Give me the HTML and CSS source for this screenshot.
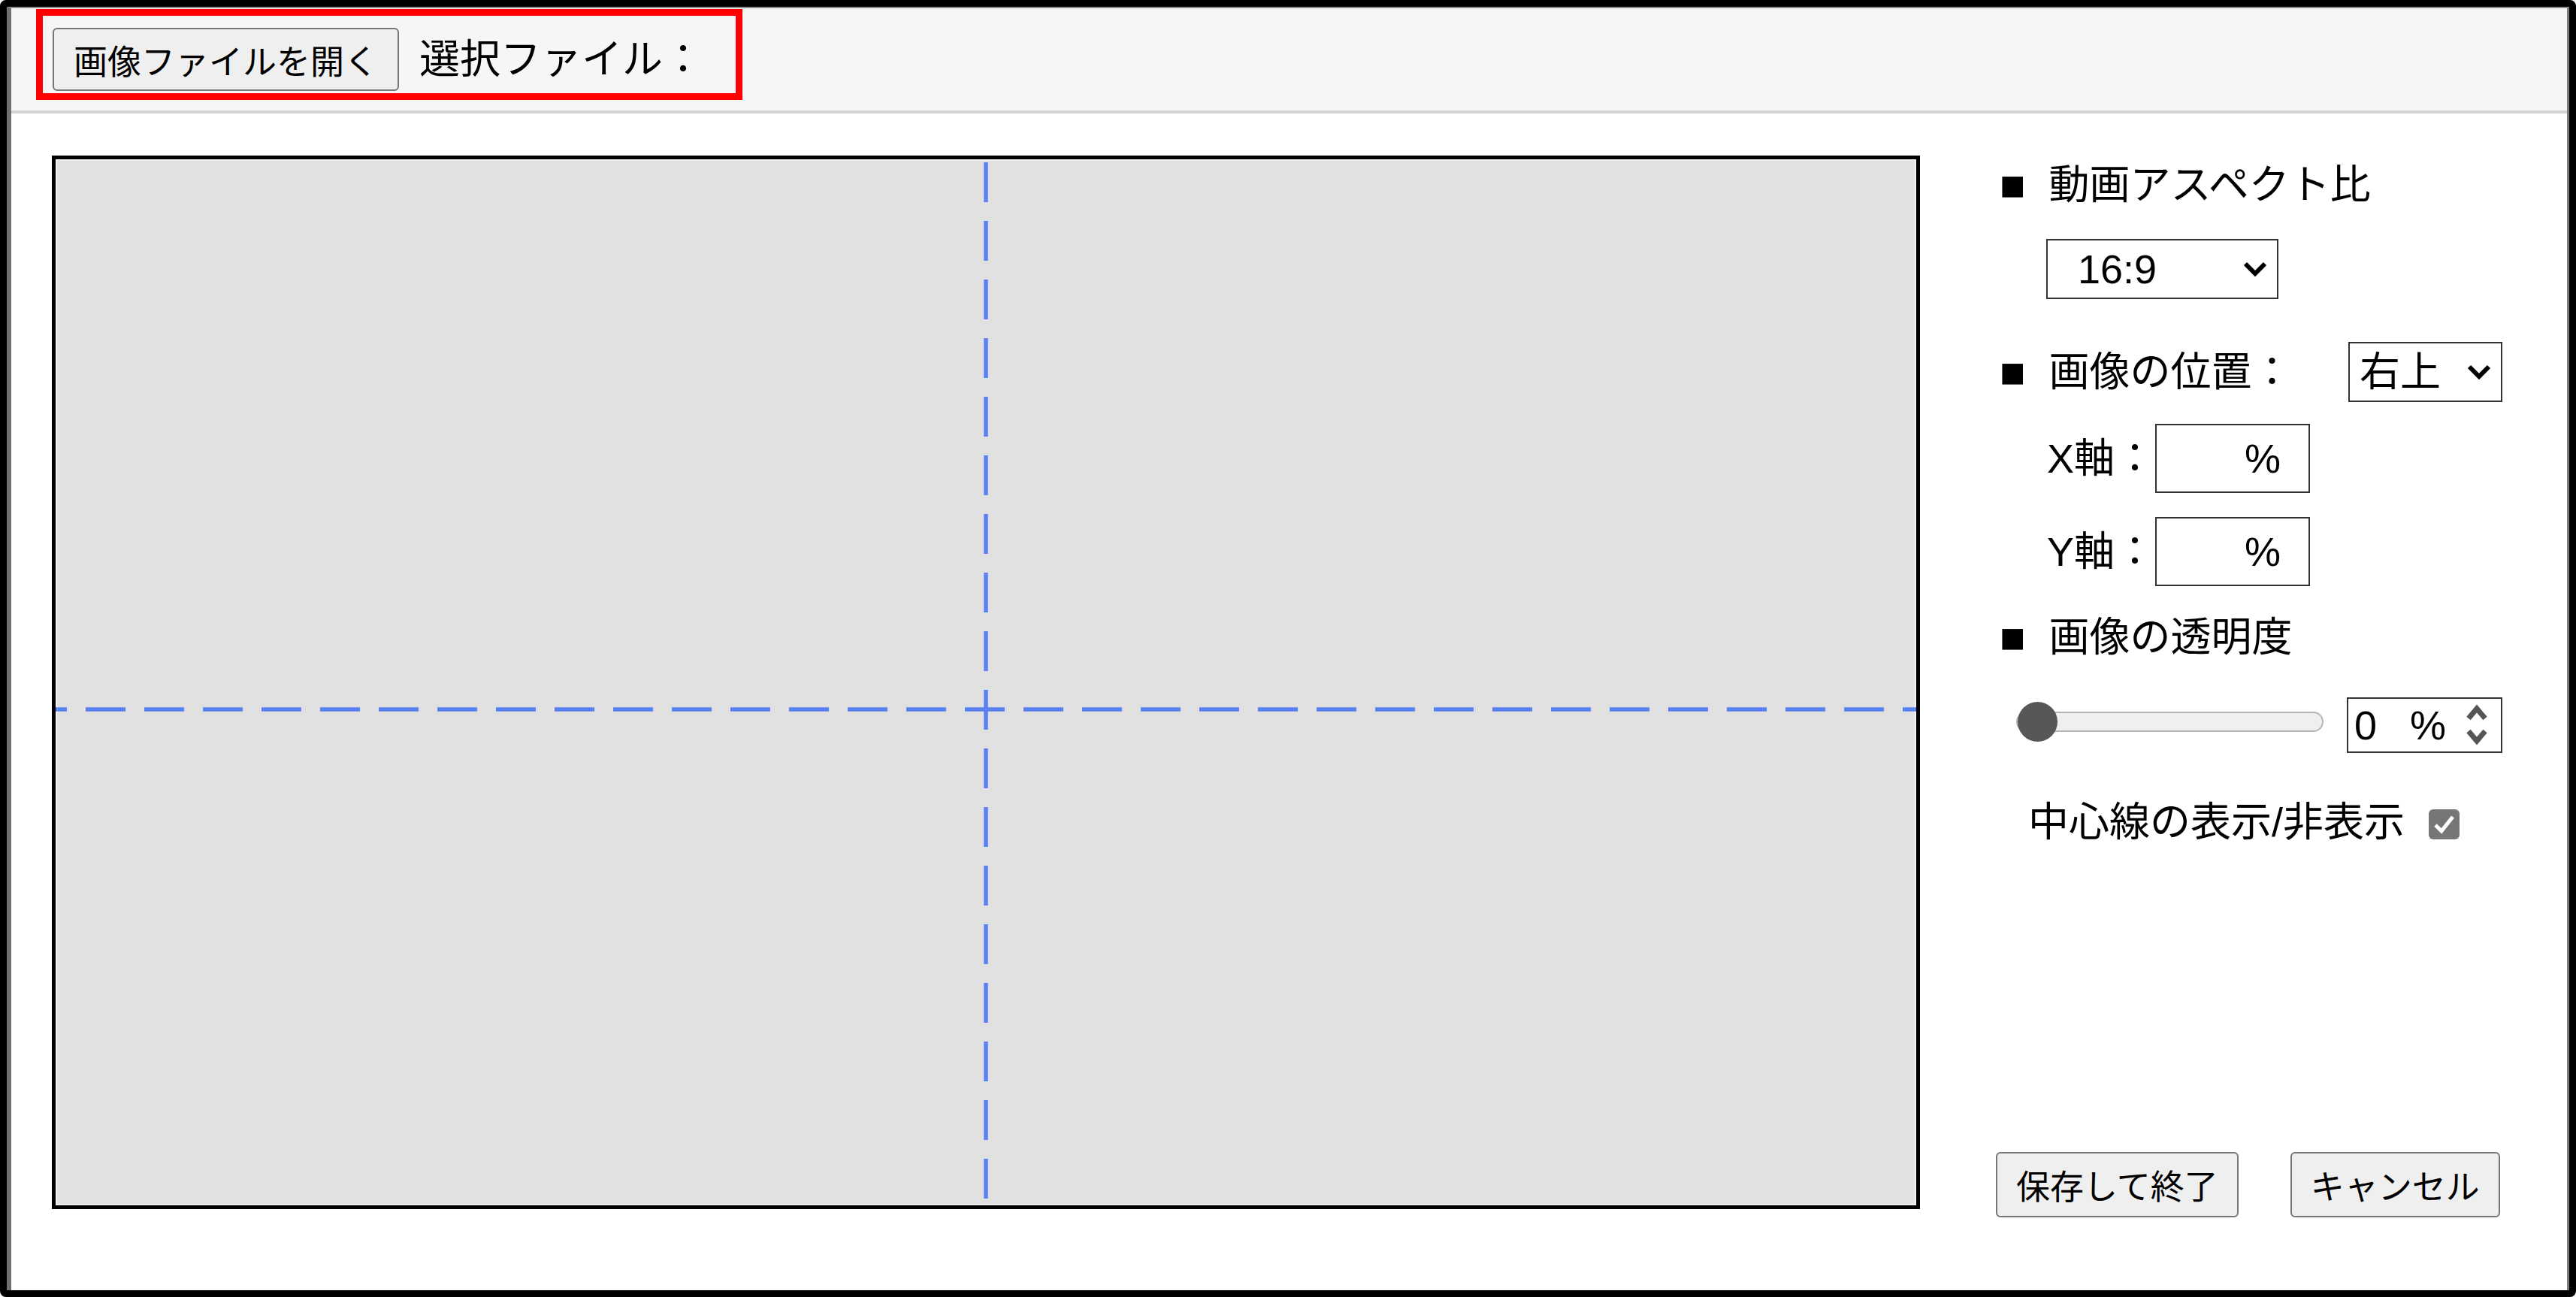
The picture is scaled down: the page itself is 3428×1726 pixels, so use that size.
FILE: index.html
```html
<!DOCTYPE html>
<html lang="ja">
<head>
    <meta charset="UTF-8">
    <meta name="viewport" content="width=device-width, initial-scale=1.0">
    <title>画像位置の設定</title>
    <link rel="stylesheet" href="styles.css">
</head>
<body>
    <div class="window">
        <div class="app">
            <header class="toolbar">
                <button class="btn btn-open">画像ファイルを開く</button>
                <span class="file-label">選択ファイル：</span>
                <div class="highlight"></div>
            </header>

            <main class="workspace">
                <div class="preview">
                    <svg class="guides" width="2476" height="1392" viewBox="0 0 2476 1392">
                        <line x1="1238" y1="0" x2="1238" y2="1392" stroke="#5a81f4" stroke-width="5.5" stroke-dasharray="53 25" stroke-dashoffset="74"/>
                        <line x1="0" y1="732" x2="2476" y2="732" stroke="#5a81f4" stroke-width="5.5" stroke-dasharray="53 25" stroke-dashoffset="38"/>
                    </svg>
                </div>

                <aside class="panel">
                    <div class="heading"><span class="mark">■</span>動画アスペクト比</div>
                    <div class="select select-aspect">
                        <select>
                            <option>16:9</option>
                            <option>4:3</option>
                            <option>1:1</option>
                        </select>
                        <svg class="chevron" width="32" height="20" viewBox="0 0 32 20"><path d="M3 3 L16 16 L29 3" fill="none" stroke="#000" stroke-width="6"/></svg>
                    </div>

                    <div class="heading heading-pos">
                        <span class="mark">■</span>画像の位置：
                        <div class="select select-pos">
                            <select>
                                <option>右上</option>
                                <option>左上</option>
                                <option>右下</option>
                                <option>左下</option>
                                <option>中央</option>
                            </select>
                            <svg class="chevron" width="32" height="20" viewBox="0 0 32 20"><path d="M3 3 L16 16 L29 3" fill="none" stroke="#000" stroke-width="6"/></svg>
                        </div>
                    </div>

                    <div class="axis axis-x">
                        <label for="posX">X軸：</label>
                        <div class="unit-box">
                            <input type="text" id="posX">
                            <span>%</span>
                        </div>
                    </div>
                    <div class="axis axis-y">
                        <label for="posY">Y軸：</label>
                        <div class="unit-box">
                            <input type="text" id="posY">
                            <span>%</span>
                        </div>
                    </div>

                    <div class="heading heading-opacity"><span class="mark">■</span>画像の透明度</div>
                    <div class="opacity-row">
                        <input type="range" class="range" min="0" max="100" value="0">
                        <div class="number-box">
                            <input type="text" value="0">
                            <span>%</span>
                            <svg class="spinner" width="30" height="56" viewBox="0 0 30 56">
                                <path d="M4 19 L15 6 L26 19" fill="none" stroke="#555" stroke-width="7"/>
                                <path d="M4 36 L15 49 L26 36" fill="none" stroke="#555" stroke-width="7"/>
                            </svg>
                        </div>
                    </div>

                    <label class="toggle">中心線の表示/非表示
                        <svg class="check" width="41" height="40" viewBox="0 0 41 40">
                            <rect x="0" y="0" width="41" height="40" rx="6" fill="#767676"/>
                            <path d="M9 21 L17 29 L32 10" fill="none" stroke="#fff" stroke-width="5"/>
                        </svg>
                    </label>

                    <div class="actions">
                        <button class="btn">保存して終了</button>
                        <button class="btn">キャンセル</button>
                    </div>
                </aside>
            </main>
        </div>
    </div>
</body>
</html>
```

FILE: styles.css
```css
body {
    margin: 0;
    font-family: "Liberation Sans", "Noto Sans CJK JP", sans-serif;
    font-size: 54px;
    color: #000;
    background: #fff;
}

.window {
    width: 3428px;
    height: 1726px;
    box-sizing: border-box;
    border: 9px solid #000;
    border-radius: 8px;
    overflow: hidden;
}

.app {
    height: 100%;
    box-sizing: border-box;
    border-left: 6px solid #707070;
    border-top: 2px solid #8c8c8c;
    border-right: 3px solid #7c7c7c;
    display: flex;
    flex-direction: column;
}

/* top bar */
.toolbar {
    position: relative;
    height: 136px;
    padding-left: 55px;
    display: flex;
    align-items: center;
    background: #f6f6f6;
    border-bottom: 4px solid #d4d4d4;
}

.highlight {
    position: absolute;
    left: 33px;
    top: 1px;
    width: 940px;
    height: 121px;
    box-sizing: border-box;
    border: 9px solid #ff0000;
    pointer-events: none;
}

.btn {
    font-family: "Liberation Sans", "Noto Sans CJK JP", sans-serif;
    font-size: 45px;
    color: #000;
    background: #efefef;
    border: 2px solid #767676;
    border-radius: 6px;
    padding: 0 26px;
    height: 84px;
    cursor: pointer;
}

.file-label {
    margin-left: 27px;
    line-height: 76px;
}

/* main */
.workspace {
    flex: 1;
    display: flex;
    align-items: flex-start;
    padding: 56px 0 0 54px;
    gap: 101px;
}

.preview {
    width: 2486px;
    height: 1402px;
    box-sizing: border-box;
    border: 5px solid #000;
    background: #e1e1e1;
    box-shadow: inset 0 0 0 2px #f3f3f3;
}

.guides {
    display: block;
}

.panel {
    width: 676px;
    height: 1412px;
    margin-top: 1px;
    display: flex;
    flex-direction: column;
}

.heading {
    display: flex;
    align-items: center;
    min-height: 76px;
    line-height: 76px;
    padding-left: 5px;
}

.mark {
    font-size: 57px;
    margin-right: 31px;
}

.select {
    position: relative;
    height: 80px;
}
.select select {
    -webkit-appearance: none;
    appearance: none;
    width: 100%;
    height: 100%;
    box-sizing: border-box;
    border: 2px solid #333;
    border-radius: 0;
    background: #fff;
    font-family: inherit;
    font-size: 54px;
    color: #000;
    outline: none;
}
.chevron {
    position: absolute;
    right: 15px;
    top: 50%;
    margin-top: -10px;
    pointer-events: none;
}

.select-aspect {
    width: 309px;
    margin: 34px 0 0 67px;
}
.select-aspect select {
    padding-left: 40px;
}

.heading-pos {
    margin-top: 57px;
}
.select-pos {
    width: 205px;
    margin: 0 2px 0 auto;
}
.select-pos select {
    padding-left: 13px;
}

.axis {
    display: flex;
    align-items: center;
    padding-left: 68px;
    line-height: 76px;
}
.axis-x {
    margin-top: 29px;
}
.axis-y {
    margin-top: 32px;
}

.unit-box {
    display: flex;
    align-items: center;
    width: 206px;
    height: 92px;
    box-sizing: border-box;
    border: 2px solid #333;
    padding-right: 37px;
}
.unit-box input,
.number-box input {
    flex: 1;
    min-width: 0;
    border: 0;
    outline: 0;
    padding: 0;
    background: transparent;
    font-family: inherit;
    font-size: 54px;
    color: #000;
}

.heading-opacity {
    margin-top: 30px;
}

.opacity-row {
    display: flex;
    align-items: flex-start;
    margin-top: 42px;
    padding-left: 27px;
    gap: 31px;
}

.range {
    -webkit-appearance: none;
    appearance: none;
    width: 409px;
    height: 54px;
    margin: 5px 0 0;
    background: transparent;
}
.range::-webkit-slider-runnable-track {
    height: 27px;
    box-sizing: border-box;
    background: #efefef;
    border: 2px solid #b5b5b5;
    border-radius: 14px;
}
.range::-webkit-slider-thumb {
    -webkit-appearance: none;
    width: 53px;
    height: 53px;
    margin-top: -15px;
    border-radius: 50%;
    background: #575757;
}

.number-box {
    display: flex;
    align-items: center;
    width: 207px;
    height: 74px;
    box-sizing: border-box;
    border: 2px solid #333;
    padding-left: 8px;
}
.number-box input {
    flex: none;
    width: 74px;
}
.spinner {
    margin-left: 26px;
}

.toggle {
    display: flex;
    align-items: center;
    margin-top: 54px;
    padding-left: 43px;
    line-height: 76px;
}
.check {
    margin: 6px 0 0 32px;
}

.actions {
    margin-top: auto;
    display: flex;
    gap: 69px;
}
.actions .btn {
    height: 87px;
    padding: 0 25px;
}
```
